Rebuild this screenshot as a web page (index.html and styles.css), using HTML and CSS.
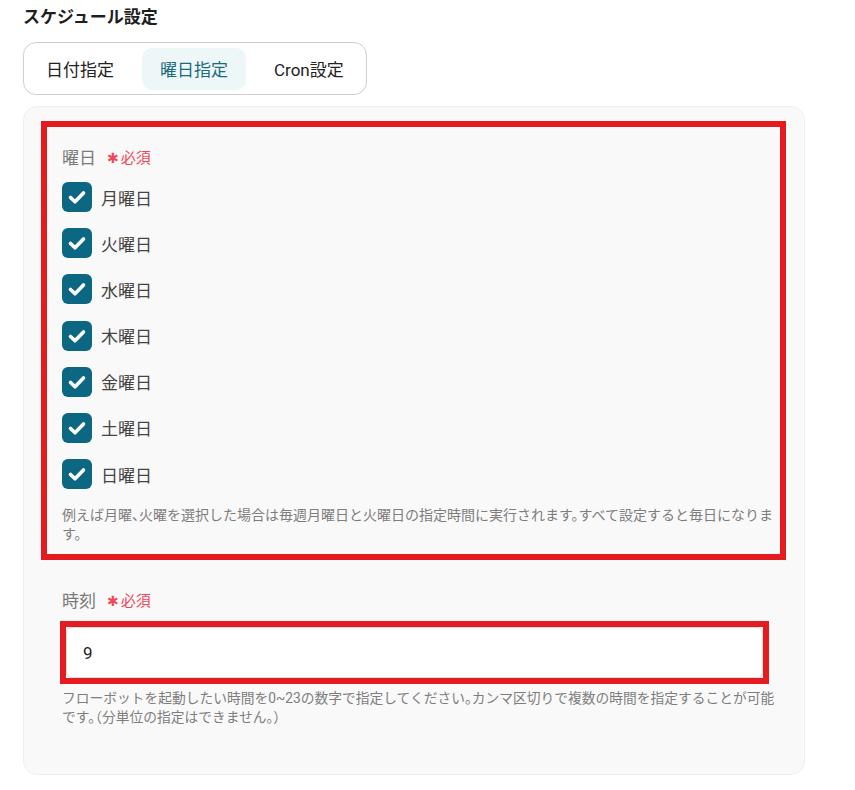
FILE: index.html
```html
<!DOCTYPE html>
<html lang="ja">
<head>
<meta charset="utf-8">
<title>スケジュール設定</title>
<link rel="stylesheet" href="styles.css">
</head>
<body>
<div class="page">
  <div class="title">スケジュール設定</div>
  <div class="tabs">
    <div class="tab">日付指定</div>
    <div class="tab active">曜日指定</div>
    <div class="tab">Cron設定</div>
  </div>
  <div class="panel">
    <div class="field boxed">
      <div class="label">曜日<span class="req"><span class="ast">✱</span>必須</span></div>
      <div class="checks">
        <div class="check"><svg class="cb" viewBox="0 0 30 30"><rect width="30" height="30" rx="6"/><path d="M8.5 15.5l4.5 4.3 8.5-8.8"/></svg><span>月曜日</span></div>
        <div class="check"><svg class="cb" viewBox="0 0 30 30"><rect width="30" height="30" rx="6"/><path d="M8.5 15.5l4.5 4.3 8.5-8.8"/></svg><span>火曜日</span></div>
        <div class="check"><svg class="cb" viewBox="0 0 30 30"><rect width="30" height="30" rx="6"/><path d="M8.5 15.5l4.5 4.3 8.5-8.8"/></svg><span>水曜日</span></div>
        <div class="check"><svg class="cb" viewBox="0 0 30 30"><rect width="30" height="30" rx="6"/><path d="M8.5 15.5l4.5 4.3 8.5-8.8"/></svg><span>木曜日</span></div>
        <div class="check"><svg class="cb" viewBox="0 0 30 30"><rect width="30" height="30" rx="6"/><path d="M8.5 15.5l4.5 4.3 8.5-8.8"/></svg><span>金曜日</span></div>
        <div class="check"><svg class="cb" viewBox="0 0 30 30"><rect width="30" height="30" rx="6"/><path d="M8.5 15.5l4.5 4.3 8.5-8.8"/></svg><span>土曜日</span></div>
        <div class="check"><svg class="cb" viewBox="0 0 30 30"><rect width="30" height="30" rx="6"/><path d="M8.5 15.5l4.5 4.3 8.5-8.8"/></svg><span>日曜日</span></div>
      </div>
      <p class="help first">例えば月曜、火曜を選択した場合は毎週月曜日と火曜日の指定時間に実行されます。すべて設定すると毎日になります。</p>
    </div>
    <div class="field time">
      <div class="label">時刻<span class="req"><span class="ast">✱</span>必須</span></div>
      <div class="input-mark">
        <div class="input">9</div>
      </div>
      <p class="help">フローボットを起動したい時間を0~23の数字で指定してください。カンマ区切りで複数の時間を指定することが可能です。（分単位の指定はできません。）</p>
    </div>
  </div>
</div>
</body>
</html>
```

FILE: styles.css
```css
* { box-sizing: border-box; }
body {
  margin: 0;
  background: #ffffff;
  font-family: Roboto, "Noto Sans CJK JP", sans-serif;
  color: #222;
}
.page {
  padding: 5px 23px 0 23px;
}
.title {
  font-size: 17px;
  font-weight: 600;
  line-height: 24px;
  color: #1f1f1f;
}
.tabs {
  margin-top: 13px;
  display: inline-flex;
  gap: 10px;
  padding: 4px 4px;
  border: 1px solid #cfcfcf;
  border-radius: 13px;
  height: 53px;
  align-items: center;
}
.tab {
  height: 42px;
  padding: 0 18px;
  display: flex;
  align-items: center;
  font-size: 17px;
  color: #222;
  border-radius: 10px;
}
.tab.active {
  background: #eef7f8;
  color: #1b6a80;
}
.panel {
  margin-top: 11px;
  width: 782px;
  height: 669px;
  background: #f9f9f9;
  border: 1px solid #efefef;
  border-radius: 14px;
  padding: 14px 18px 0 17px;
}
.field.boxed {
  border: 6px solid #e51c1f;
  padding: 20px 0 10px 15px;
}
.label {
  display: flex;
  align-items: center;
  font-size: 17px;
  line-height: 22px;
  color: #7a7a7a;
}
.req {
  margin-left: 11px;
  color: #f0485a;
  font-size: 15px;
  display: flex;
  align-items: center;
}
.ast {
  font-family: "DejaVu Sans", sans-serif;
  font-size: 14px;
  margin-right: 2px;
}
.checks {
  margin-top: 13px;
  display: flex;
  flex-direction: column;
  gap: 16.2px;
}
.check {
  display: flex;
  align-items: center;
  height: 30px;
  gap: 9px;
  font-size: 17px;
  color: #444;
}
.cb {
  width: 30px;
  height: 30px;
  flex: none;
}
.cb rect { fill: #0c6782; }
.cb path {
  fill: none;
  stroke: #ffffff;
  stroke-width: 3.6;
  stroke-linecap: round;
  stroke-linejoin: round;
}
.help {
  margin: 0;
  font-size: 14px;
  line-height: 19px;
  color: #7d7d7d;
  font-feature-settings: "halt";
}
.help.first {
  margin-top: 17px;
}
.field.time {
  padding: 30px 0 0 21px;
}
.input-mark {
  margin: 9px 17px 0 -2px;
  border: 6px solid #e51c1f;
}
.input {
  height: 51px;
  background: #ffffff;
  border: 1px solid #dcdcdc;
  border-radius: 6px;
  padding-left: 16px;
  display: flex;
  align-items: center;
  font-size: 17px;
  color: #222;
}
.field.time .help {
  margin-top: 5px;
  font-size: 13.75px;
}
```
